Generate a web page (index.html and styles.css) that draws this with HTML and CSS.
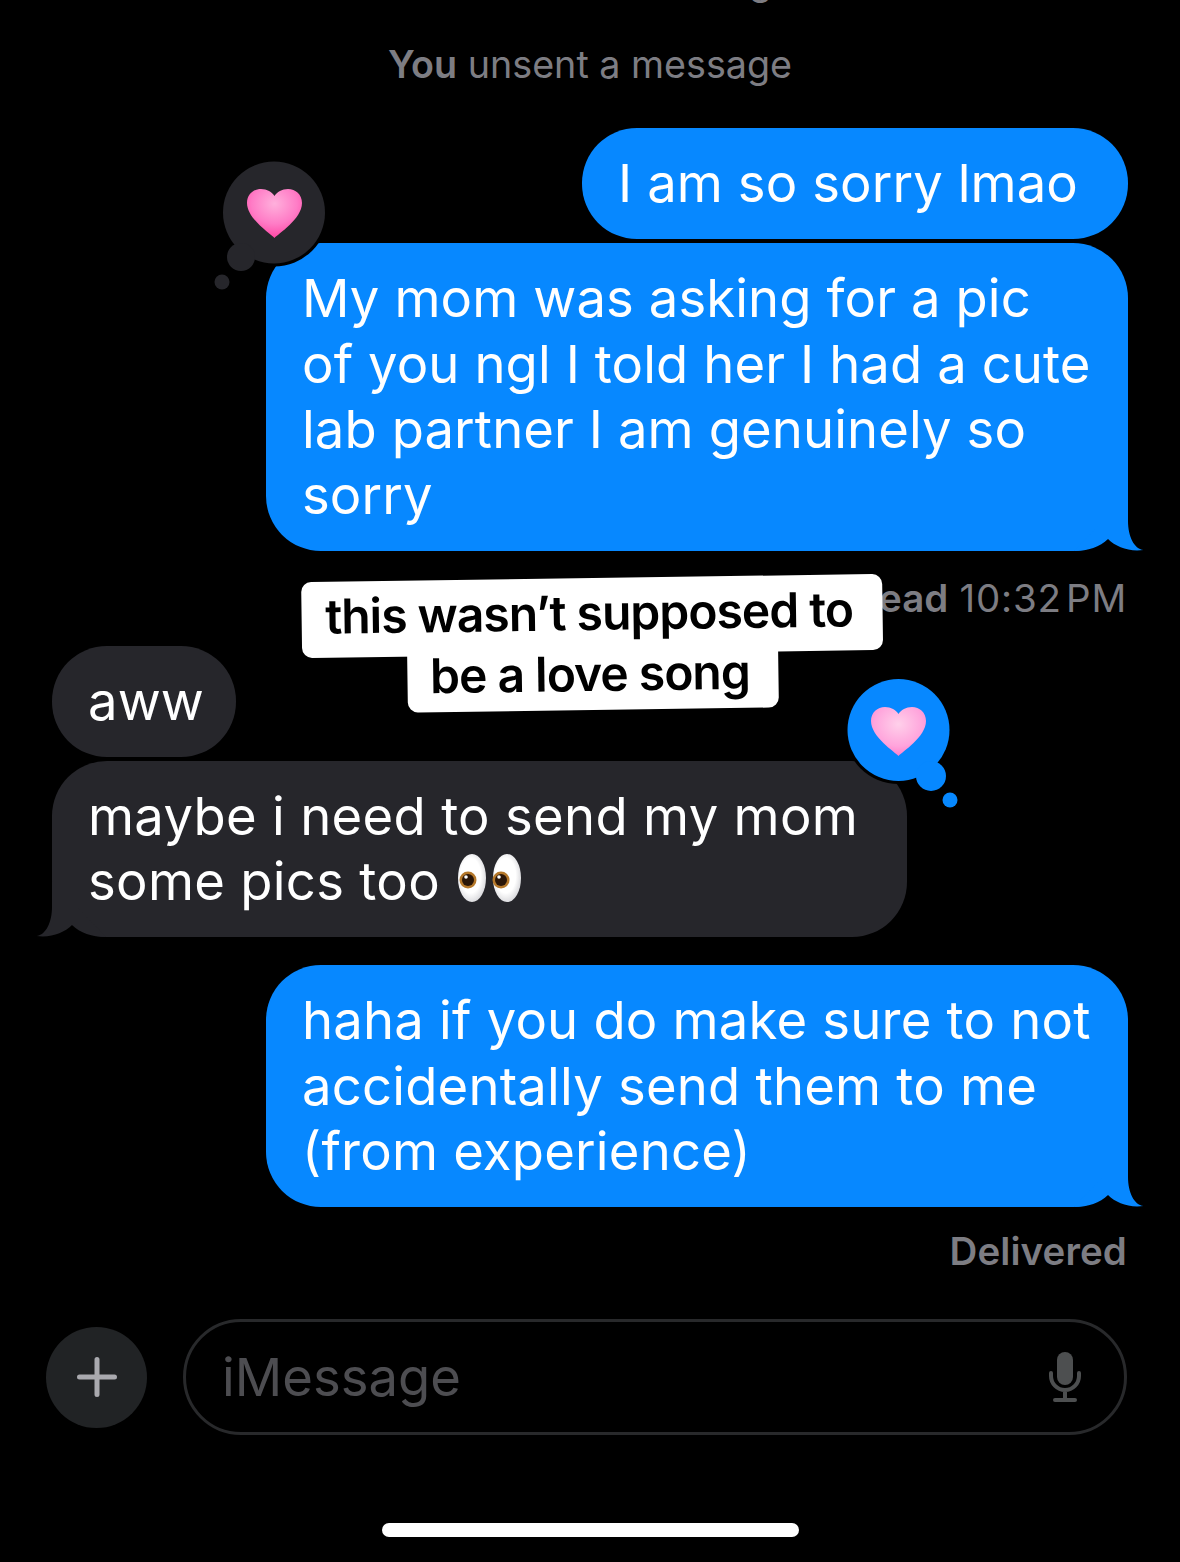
FILE: index.html
```html
<!DOCTYPE html>
<html lang="en">
<head>
    <meta charset="UTF-8">
    <title>Messages</title>
    <link rel="stylesheet" href="styles.css">
</head>
<body>
    <span class="cut-off">g</span>

    <main class="thread">
        <p class="system-note"><strong>You</strong> unsent a message</p>

        <div class="bubble sent first">I am so sorry lmao</div>
        <div class="bubble sent wide">
            My mom was asking for a pic<br>of you ngl I told her I had a cute<br>lab partner I am genuinely so<br>sorry
            <svg class="reaction reaction-sent" viewBox="0 0 120 140" aria-hidden="true">
                <defs>
                    <radialGradient id="heart-deep" cx="50%" cy="30%" r="75%">
                        <stop offset="0" stop-color="#ffb0dc"/>
                        <stop offset="0.55" stop-color="#ff7cc6"/>
                        <stop offset="1" stop-color="#ff3d9e"/>
                    </radialGradient>
                </defs>
                <circle cx="64" cy="57.5" r="54" fill="#000"/>
                <circle cx="64" cy="57.5" r="51" fill="#26262b"/>
                <circle cx="31" cy="102" r="14" fill="#26262b"/>
                <circle cx="12" cy="127" r="7.5" fill="#26262b"/>
                <path transform="translate(37 34)" fill="url(#heart-deep)" d="M27.5 49C24 45 0 30 0 14 0 5.5 6.5 0 14 0c6 0 11 3 13.5 7C30 3 35 0 41 0c7.5 0 14 5.5 14 14 0 16-24 31-27.5 35z"/>
            </svg>
            <svg class="tail tail-right" viewBox="0 0 70 56" aria-hidden="true"><path d="M54 0v26c0 15 6 28 15.5 29C55 57 42 52 34 44 26 52 14 56 0 56z"/></svg>
        </div>
        <p class="status read"><strong>Read</strong> <span class="time">10:32&#8202;PM</span></p>

        <div class="bubble received first">aww</div>
        <div class="bubble received wider">
            maybe i need to send my mom<br>some pics too
            <svg class="eyes" viewBox="0 0 64 50" aria-hidden="true">
                <defs>
                    <radialGradient id="eye-white" cx="45%" cy="45%" r="60%">
                        <stop offset="0.6" stop-color="#fff"/>
                        <stop offset="1" stop-color="#d4d4d8"/>
                    </radialGradient>
                </defs>
                <ellipse cx="14" cy="25" rx="14" ry="24" fill="url(#eye-white)"/>
                <ellipse cx="49" cy="25" rx="14" ry="24" fill="url(#eye-white)"/>
                <circle cx="10" cy="27" r="8.5" fill="#b5782a"/>
                <circle cx="10" cy="27" r="6" fill="#2a1608"/>
                <circle cx="43" cy="27" r="8.5" fill="#b5782a"/>
                <circle cx="43" cy="27" r="6" fill="#2a1608"/>
                <circle cx="8" cy="24" r="1.8" fill="#fff"/>
                <circle cx="41" cy="24" r="1.8" fill="#fff"/>
            </svg>
            <svg class="reaction reaction-received" viewBox="0 0 125 140" aria-hidden="true">
                <defs>
                    <radialGradient id="heart-soft" cx="50%" cy="35%" r="75%">
                        <stop offset="0" stop-color="#ffd0ea"/>
                        <stop offset="0.6" stop-color="#ffa4dc"/>
                        <stop offset="1" stop-color="#ff6cc4"/>
                    </radialGradient>
                </defs>
                <circle cx="60.5" cy="60" r="54" fill="#000"/>
                <circle cx="60.5" cy="60" r="51" fill="#0788ff"/>
                <circle cx="93" cy="106" r="15" fill="#0788ff"/>
                <circle cx="112" cy="130" r="7.5" fill="#0788ff"/>
                <path transform="translate(33 37)" fill="url(#heart-soft)" d="M27.5 49C24 45 0 30 0 14 0 5.5 6.5 0 14 0c6 0 11 3 13.5 7C30 3 35 0 41 0c7.5 0 14 5.5 14 14 0 16-24 31-27.5 35z"/>
            </svg>
            <svg class="tail tail-left" viewBox="0 0 70 56" aria-hidden="true"><path d="M54 0v26c0 15 6 28 15.5 29C55 57 42 52 34 44 26 52 14 56 0 56z"/></svg>
        </div>

        <div class="bubble sent wide later">
            haha if you do make sure to not<br>accidentally send them to me<br>(from experience)
            <svg class="tail tail-right" viewBox="0 0 70 56" aria-hidden="true"><path d="M54 0v26c0 15 6 28 15.5 29C55 57 42 52 34 44 26 52 14 56 0 56z"/></svg>
        </div>
        <p class="status delivered"><strong>Delivered</strong></p>
    </main>

    <!-- video caption sitting on top of the screenshot -->
    <div class="caption">
        <span class="caption-line">this wasn’t supposed to</span>
        <span class="caption-line short">be a love song</span>
    </div>

    <footer class="composer">
        <div class="plus">
            <svg viewBox="0 0 40 40" aria-hidden="true"><path d="M20 2.5v35M2.5 20h35"/></svg>
        </div>
        <div class="field">
            <span class="placeholder">iMessage</span>
            <svg class="mic" viewBox="0 0 36 54" aria-hidden="true">
                <rect class="mic-head" x="10" y="2" width="16" height="33" rx="8"/>
                <path class="mic-stand" d="M4 23v3a14 14 0 0 0 28 0v-3M18 40v9M8 50h20"/>
            </svg>
        </div>
    </footer>
    <div class="home-bar"></div>
</body>
</html>
```

FILE: styles.css
```css
/* General Styles */
* {
    box-sizing: border-box;
}

body {
    position: relative;
    width: 1180px;
    height: 1562px;
    margin: 0;
    overflow: hidden;
    background: #000;
    color: #fff;
    font-family: Inter, "Liberation Sans", sans-serif;
}

.cut-off {
    position: absolute;
    top: -40px;
    left: 749px;
    font-size: 37.5px;
    line-height: 44px;
    color: #7d7d83;
}

/* Thread */
.thread {
    display: flex;
    flex-direction: column;
    padding: 42px 52px 0;
}

.system-note {
    margin: 0 0 42px;
    font-size: 37.7px;
    line-height: 44px;
    text-align: center;
    color: #7d7d83;
}

.system-note strong {
    font-weight: 600;
}

.bubble {
    position: relative;
    margin-top: 4px;
    padding: 23.25px 36px 22.25px;
    border-radius: 55px;
    font-size: 52.6px;
    letter-spacing: 0.1px;
    line-height: 65.5px;
    white-space: nowrap;
}

.bubble.first {
    margin-top: 0;
}

.bubble.later {
    margin-top: 28px;
    letter-spacing: 0.2px;
}

.sent {
    align-self: flex-end;
    background: #0788ff;
}

.sent.first {
    padding-right: 50px;
}

.received {
    align-self: flex-start;
    background: #26262b;
}

.received.first {
    padding-right: 32px;
}

.wide {
    width: 862px;
}

.wider {
    width: 855px;
    letter-spacing: 0.3px;
}

/* Tails */
.tail {
    position: absolute;
    bottom: 0;
    width: 70px;
    height: 56px;
}

.tail-right {
    right: -16px;
    fill: #0788ff;
}

.tail-left {
    left: -16px;
    fill: #26262b;
    transform: scaleX(-1);
}

/* Tapbacks */
.reaction {
    position: absolute;
}

.reaction-sent {
    top: -88px;
    left: -56px;
    width: 120px;
    height: 140px;
}

.reaction-received {
    top: -91px;
    right: -56px;
    width: 125px;
    height: 140px;
}

.eyes {
    width: 64px;
    height: 50px;
    margin-left: 3px;
    vertical-align: -3px;
}

/* Status lines */
.status {
    align-self: flex-end;
    margin: 25px 1px 26px 0;
    font-size: 38.5px;
    line-height: 44px;
    letter-spacing: 0.1px;
    color: #7d7d83;
}

.status strong {
    font-weight: 600;
}

.time {
    letter-spacing: 0.8px;
}

.delivered {
    margin: 22px 1px 0 0;
}

/* Caption */
.caption {
    position: absolute;
    top: 578px;
    left: 302px;
    width: 581px;
    display: flex;
    flex-direction: column;
    align-items: center;
    transform: rotate(-0.8deg);
    color: #000;
    font-size: 48px;
    font-weight: 600;
    letter-spacing: -1px;
    line-height: 62px;
}

.caption-line {
    display: block;
    width: 100%;
    padding: 4px 6px 10px 0;
    border-radius: 10px;
    background: #fff;
    text-align: center;
    white-space: nowrap;
}

.caption-line.short {
    width: 371px;
    margin-top: -11px;
    padding: 0 6px 5px 0;
}

/* Composer */
.composer {
    position: absolute;
    top: 1319px;
    left: 46px;
    display: flex;
    align-items: center;
    gap: 36px;
}

.plus {
    display: flex;
    align-items: center;
    justify-content: center;
    width: 101px;
    height: 101px;
    border-radius: 50%;
    background: #212325;
}

.plus svg {
    width: 40px;
    height: 40px;
    fill: none;
    stroke: #a9a9ae;
    stroke-width: 5;
    stroke-linecap: round;
}

.field {
    display: flex;
    align-items: center;
    justify-content: space-between;
    width: 944px;
    height: 116px;
    padding: 0 41px 0 36px;
    border: 3px solid #28292b;
    border-radius: 58px;
}

.placeholder {
    font-size: 52.6px;
    color: #4d4d51;
}

.mic {
    width: 36px;
    height: 54px;
}

.mic-head {
    fill: #4d4f50;
}

.mic-stand {
    fill: none;
    stroke: #4d4f50;
    stroke-width: 4;
    stroke-linecap: round;
}

.home-bar {
    position: absolute;
    top: 1523px;
    left: 382px;
    width: 417px;
    height: 14px;
    border-radius: 7px;
    background: #fff;
}
```
